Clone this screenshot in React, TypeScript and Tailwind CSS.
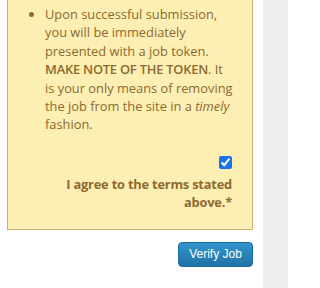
export default function App() {
  return (
    <div className="flex h-[288px] w-[288px] overflow-hidden bg-white font-['Open_Sans',sans-serif]">
      <main className="w-[263px] shrink-0 bg-white">
        <div className="mt-[-13px] ml-[7px] w-[246px] border border-[#d2b26e] bg-[#fdefb3] pt-[17px] pr-[19px] pb-[17px] pl-[14px] text-[#8d6a2f]">
          <ul className="list-disc pl-[23px] text-[12.85px] leading-[18.4px] marker:text-[#8d6a2f]">
            <li>
              Upon successful submission, you will be immediately presented with a job token.{" "}
              <strong className="font-semibold tracking-[-0.2px]">MAKE NOTE OF THE TOKEN</strong>. It is
              your only means of removing the job from the site in a <em>timely</em> fashion.
            </li>
          </ul>
          <div className="mt-[22px] flex flex-col items-end pr-[1px] text-right">
            <input
              type="checkbox"
              defaultChecked
              className="m-0 size-[13px] accent-[#1a73e8]"
            />
            <label className="mt-[6px] w-[170px] text-[12.85px] font-bold tracking-[-0.2px] leading-[18.4px]">
              I agree to the terms stated above.*
            </label>
          </div>
        </div>
        <div className="mt-[12px] flex justify-end pr-[10px]">
          <button className="h-[25px] w-[75px] rounded-[4px] border border-[#1d6b9a] bg-gradient-to-b from-[#3196cd] to-[#1f72a5] font-['Liberation_Sans',Arial,sans-serif] text-[12px] text-white">
            Verify Job
          </button>
        </div>
      </main>
      <aside className="flex-1 bg-[#efefef]" />
    </div>
  );
}
